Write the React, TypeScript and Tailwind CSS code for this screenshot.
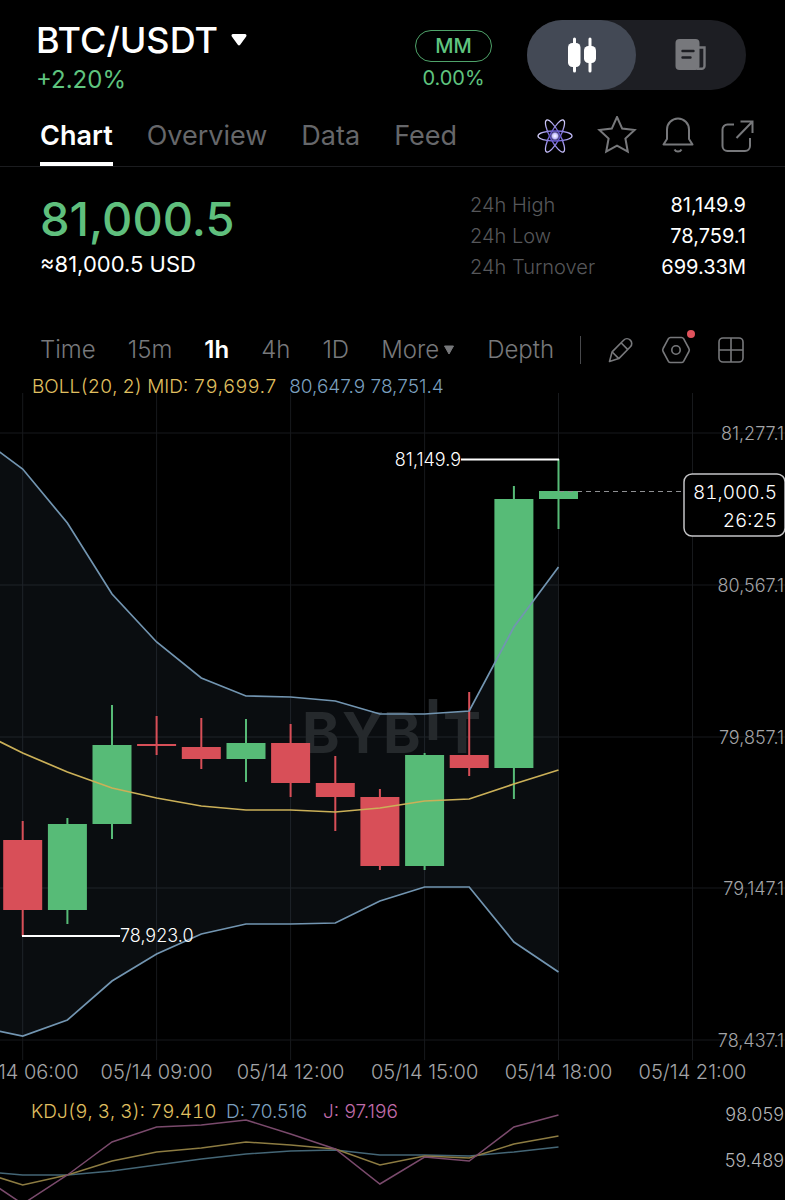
import { useState } from "react";

const TABS = ["Chart", "Overview", "Data", "Feed"];
const INTERVALS = ["Time", "15m", "1h", "4h", "1D"];

const STATS = [
  { label: "24h High", value: "81,149.9" },
  { label: "24h Low", value: "78,759.1" },
  { label: "24h Turnover", value: "699.33M" },
];

const UP = "#57bb77";
const DOWN = "#d84f58";

// body top, body bottom, wick top, wick bottom
const CANDLES = [
  { up: false, top: 447, bottom: 517, high: 428, low: 543 },
  { up: true, top: 431, bottom: 517, high: 425, low: 531 },
  { up: true, top: 352, bottom: 431, high: 312, low: 446 },
  { up: false, top: 351, bottom: 353, high: 323, low: 362 },
  { up: false, top: 354, bottom: 366, high: 325, low: 376 },
  { up: true, top: 350, bottom: 366, high: 326, low: 389 },
  { up: false, top: 350, bottom: 390, high: 331, low: 404 },
  { up: false, top: 390, bottom: 404, high: 363, low: 438 },
  { up: false, top: 404, bottom: 473, high: 396, low: 477 },
  { up: true, top: 362, bottom: 473, high: 360, low: 477 },
  { up: false, top: 362, bottom: 375, high: 299, low: 383 },
  { up: true, top: 106, bottom: 375, high: 93, low: 406 },
  { up: true, top: 98, bottom: 106, high: 66, low: 136 },
];

// first value of each series is the bar left of the visible range
const BOLL_UPPER = [43, 76, 130, 201, 249, 285, 303, 304, 308, 321, 321, 318, 234, 174];
const BOLL_MID = [338, 360, 379, 395, 405, 413, 417, 417, 419, 415, 408, 406, 391, 377];
const BOLL_LOWER = [634, 643, 627, 588, 561, 541, 531, 531, 530, 508, 494, 494, 549, 579];

const KDJ_K = [71, 85, 75, 61, 52, 48, 42, 45, 49, 65, 56, 58, 44, 36];
const KDJ_D = [71, 75, 75, 71, 65, 59, 54, 51, 50, 55, 55, 56, 52, 47];
const KDJ_J = [74, 104, 75, 42, 27, 25, 20, 34, 49, 84, 57, 61, 27, 15];

const PRICES = ["81,277.1", "80,567.1", "79,857.1", "79,147.1", "78,437.1"];
const TIMES = ["05/14 06:00", "05/14 09:00", "05/14 12:00", "05/14 15:00", "05/14 18:00", "05/14 21:00"];

const barX = (i: number) => Math.round((22.7 + i * 44.65) * 10) / 10;
const gridY = (i: number) => 40 + Math.round(i * 151.8);
const points = (series: number[]) => series.map((y, i) => `${barX(i - 1)},${y}`).join(" ");

function CandleIcon() {
  return (
    <svg width="30" height="36" viewBox="0 0 30 36" fill="currentColor" aria-hidden="true">
      <rect x="6" y="0.5" width="3" height="35" rx="1.5" />
      <rect x="1" y="6" width="12.5" height="24" rx="4.5" />
      <rect x="21.5" y="0.5" width="3" height="35" rx="1.5" />
      <rect x="17" y="9" width="12" height="17" rx="4.5" />
    </svg>
  );
}

function NewsIcon() {
  return (
    <svg width="32" height="32" viewBox="0 0 32 32" aria-hidden="true">
      <path d="M24 8.5h5.5v18.5a2.8 2.8 0 0 1-2.8 2.8H22" fill="none" stroke="#77787c" strokeWidth="2.4" />
      <rect x="0.5" y="0" width="24" height="31" rx="4" fill="#77787c" />
      <path d="M7.5 12h11M7.5 18.5h8" stroke="#1d1e23" strokeWidth="2.4" strokeLinecap="round" />
    </svg>
  );
}

function AtomIcon() {
  return (
    <svg width="36" height="36" viewBox="0 0 36 36" fill="none" aria-hidden="true">
      <defs>
        <radialGradient id="core">
          <stop offset="0" stopColor="#ffffff" />
          <stop offset="0.5" stopColor="#c4bdff" />
          <stop offset="1" stopColor="#5a4bd0" stopOpacity="0" />
        </radialGradient>
        <linearGradient id="orbit" x1="0" y1="0" x2="1" y2="0">
          <stop offset="0" stopColor="#d9d4ff" />
          <stop offset="0.5" stopColor="#5a4bc8" />
          <stop offset="1" stopColor="#c9c2ff" />
        </linearGradient>
      </defs>
      <g stroke="url(#orbit)" strokeWidth="1.3">
        <ellipse cx="18" cy="18" rx="17" ry="5" />
        <ellipse cx="18" cy="18" rx="18" ry="5" transform="rotate(62 18 18)" />
        <ellipse cx="18" cy="18" rx="18" ry="5" transform="rotate(118 18 18)" />
      </g>
      <circle cx="18" cy="18" r="5.5" fill="url(#core)" />
    </svg>
  );
}

function StarIcon() {
  return (
    <svg width="40" height="40" viewBox="0 0 40 40" fill="none" stroke="currentColor" strokeWidth="2" aria-hidden="true">
      <path d="M20 1l5.2 11.6 12.4 1.4-9.2 8.5 2.4 13.2L20 29.7 9.2 35.7l2.4-13.2L2.4 14l12.4-1.4z" />
    </svg>
  );
}

function BellIcon() {
  return (
    <svg width="34" height="38" viewBox="0 0 34 38" fill="none" stroke="currentColor" strokeWidth="2" aria-hidden="true">
      <path d="M2.5 27.5h29L28 22V12.500a11 11 0 0 0-22 0V22z" strokeLinejoin="round" />
      <path d="M13.5 32.5c1.500 2.800 5.500 2.800 7 0" />
    </svg>
  );
}

function ShareIcon() {
  return (
    <svg width="36" height="36" viewBox="0 0 36 36" fill="none" stroke="currentColor" strokeWidth="2" aria-hidden="true">
      <path d="M15 6.5H8.5a5 5 0 0 0-5 5V28a5 5 0 0 0 5 5H26a5 5 0 0 0 5-5v-8" />
      <path d="M21.5 3.5H33.5V15M33.5 3.5L17.5 20" />
    </svg>
  );
}

function PencilIcon() {
  return (
    <svg width="26" height="26" viewBox="0 0 26 26" fill="none" stroke="currentColor" strokeWidth="1.6" aria-hidden="true">
      <path d="M1.5 24.5l2.6-9.600L15.600 3.200a4.600 4.600 0 0 1 6.800 6.600L10.800 21.600z" strokeLinejoin="round" />
      <path d="M13 5.800l6.800 6.800M4.200 15l6.600 6.600" />
    </svg>
  );
}

function SettingsIcon() {
  return (
    <svg width="30" height="28" viewBox="0 0 30 28" fill="none" stroke="currentColor" strokeWidth="1.6" aria-hidden="true">
      <path d="M9.500 1.500h11a2.500 2.500 0 0 1 2.100 1.200l5.300 9.800a3 3 0 0 1 0 3l-5.300 9.800a2.500 2.500 0 0 1-2.100 1.200h-11a2.500 2.500 0 0 1-2.100-1.200L2.100 15.500a3 3 0 0 1 0-3l5.300-9.800a2.500 2.500 0 0 1 2.100-1.200z" />
      <circle cx="15" cy="14" r="4.2" />
    </svg>
  );
}

function LayoutIcon() {
  return (
    <svg width="26" height="26" viewBox="0 0 26 26" fill="none" stroke="currentColor" strokeWidth="1.6" aria-hidden="true">
      <rect x="1" y="1" width="24" height="24" rx="4" />
      <path d="M13 1v24M1 13h24" />
    </svg>
  );
}

function PriceChart() {
  return (
    <svg viewBox="0 0 785 707" className="block h-auto w-full" role="img" aria-label="BTC/USDT 1h candles">
      {/* Grid */}
      <g stroke="#17191c" strokeWidth="1">
        {PRICES.map((price, i) => (
          <path key={price} d={`M0 ${gridY(i)}H785`} />
        ))}
        {TIMES.map((time, i) => (
          <path key={time} d={`M${barX(i * 3)} 0V667`} />
        ))}
      </g>

      {/* Bollinger area */}
      <polygon points={`${points(BOLL_UPPER)} ${points(BOLL_LOWER).split(" ").reverse().join(" ")}`} fill="#7fa8c8" fillOpacity="0.08" />

      <text x="302 342 383 425 443" y="360 360 360 347 360" fontSize="57" fontWeight="700" fill="#25292c">
        BYBIT
      </text>

      {/* Candles */}
      {CANDLES.map((c, i) => (
        <g key={i} fill={c.up ? UP : DOWN}>
          <rect x={barX(i) - 1} y={c.high} width="2" height={c.low - c.high} />
          <rect x={barX(i) - 19.5} y={c.top} width="39" height={c.bottom - c.top} />
        </g>
      ))}

      <g fill="none" strokeWidth="1.7">
        <polyline points={points(BOLL_UPPER)} stroke="#7295b1" />
        <polyline points={points(BOLL_LOWER)} stroke="#7295b1" />
        <polyline points={points(BOLL_MID)} stroke="#cbb058" />
      </g>

      {/* High / low markers */}
      <path d="M461 66.5H559M22 543H120" stroke="#ffffff" strokeWidth="2" />
      <g fontSize="18" fontWeight="300" fill="#ffffff">
        <text x="461" y="73" textAnchor="end">81,149.9</text>
        <text x="120" y="549">78,923.0</text>
      </g>

      <g fontSize="18" fontWeight="300" fill="#a3a4a7" textAnchor="end">
        {PRICES.map((price, i) => (
          <text key={price} x="784" y={gridY(i) + 7}>{price}</text>
        ))}
      </g>

      {/* Last price */}
      <path d="M559 98.5H684" stroke="#8f9093" strokeWidth="1" strokeDasharray="5 4" />
      <rect x="684" y="81" width="101" height="62" rx="8" fill="#000000" stroke="#c4c4c6" strokeWidth="1.5" />
      <g fontSize="19" fontWeight="300" fill="#ffffff" textAnchor="end" className="tabular-nums">
        <text x="777" y="106">81,000.5</text>
        <text x="777" y="134">26:25</text>
      </g>

      <g fontSize="20" fontWeight="300" fill="#a3a4a7" textAnchor="middle">
        {TIMES.map((time, i) => (
          <text key={time} x={barX(i * 3)} y="686">{time}</text>
        ))}
      </g>
    </svg>
  );
}

function KdjChart() {
  return (
    <svg viewBox="0 0 785 100" className="block h-auto w-full" role="img" aria-label="KDJ indicator">
      <g fontSize="19" fontWeight="300">
        <text x="31" y="18" fill="#e0c060" className="tabular-nums">KDJ(9, 3, 3): 79.410</text>
        <text x="226" y="18" fill="#7a9fbe">D: 70.516</text>
        <text x="323" y="18" fill="#c06caa">J: 97.196</text>
      </g>
      <g fill="none" strokeWidth="1.5">
        <polyline points={points(KDJ_D)} stroke="#446676" />
        <polyline points={points(KDJ_K)} stroke="#8d7c42" />
        <polyline points={points(KDJ_J)} stroke="#7a4a6c" />
      </g>
      <g fontSize="18" fontWeight="300" fill="#b3b4b7" textAnchor="end">
        <text x="784" y="21">98.059</text>
        <text x="784" y="67">59.489</text>
      </g>
    </svg>
  );
}

export default function App() {
  const [view, setView] = useState("chart");
  const [tab, setTab] = useState("Chart");
  const [interval, setInterval] = useState("1h");

  return (
    <main className="min-h-screen overflow-x-hidden bg-black font-['Inter',sans-serif] text-white">
      {/* Pair header */}
      <header className="flex items-start pt-5 pr-[39px] pl-9">
        <div className="flex-1">
          <button className="flex h-10 items-center gap-3">
            <h1 className="text-4xl leading-10 font-medium">BTC/USDT</h1>
            <svg width="18" height="14" viewBox="0 0 18 14" fill="currentColor" aria-hidden="true">
              <path d="M3 1h12a1.500 1.500 0 0 1 1.200 2.400l-6 8.400a1.500 1.500 0 0 1-2.400 0l-6-8.400A1.500 1.500 0 0 1 3 1z" />
            </svg>
          </button>
          <p className="mt-1 text-2xl leading-8 text-[#5fc47f]">+2.20%</p>
        </div>
        <div className="mr-[35px] flex flex-col items-center pt-2.5 text-[#5fc47f]">
          <span className="flex h-8 w-[77px] items-center justify-center rounded-full border border-[#4fa36a] text-xl font-medium">MM</span>
          <span className="text-xl leading-8">0.00%</span>
        </div>
        <div className="flex h-[70px] rounded-full bg-[#1d1e23]">
          <button
            aria-label="Chart view"
            aria-pressed={view === "chart"}
            onClick={() => setView("chart")}
            className="flex w-[109px] items-center justify-center rounded-full aria-pressed:bg-[#434955]"
          >
            <CandleIcon />
          </button>
          <button
            aria-label="News view"
            aria-pressed={view === "news"}
            onClick={() => setView("news")}
            className="flex w-[110px] items-center justify-center rounded-full aria-pressed:bg-[#434955]"
          >
            <NewsIcon />
          </button>
        </div>
      </header>

      {/* Tabs */}
      <nav className="mt-2.5 flex h-[61px] items-end justify-between border-b border-[#1b1c1f] pr-[30px] pl-10">
        <div className="flex gap-[34px]">
          {TABS.map((name) => (
            <button
              key={name}
              onClick={() => setTab(name)}
              className={
                name === tab
                  ? "border-b-4 border-white pb-1.5 text-[27px] leading-10 font-semibold"
                  : "border-b-4 border-transparent pb-1.5 text-[27px] leading-10 text-[#66676a]"
              }
            >
              {name}
            </button>
          ))}
        </div>
        <div className="flex h-[60px] items-center gap-6 text-[#77787b]">
          <button aria-label="AI assistant"><AtomIcon /></button>
          <button aria-label="Favorite"><StarIcon /></button>
          <button aria-label="Alerts"><BellIcon /></button>
          <button aria-label="Share"><ShareIcon /></button>
        </div>
      </nav>

      {/* Last price and 24h stats */}
      <section className="flex items-start justify-between pt-[23px] pr-[39px] pl-10">
        <div>
          <p className="text-[47px] leading-[58px] font-medium text-[#5fbf7d]">81,000.5</p>
          <p className="text-[22px] leading-8">≈81,000.5 USD</p>
        </div>
        <dl className="w-[276px] text-xl leading-[31px]">
          {STATS.map((stat) => (
            <div key={stat.label} className="flex justify-between">
              <dt className="font-light text-[#56575a]">{stat.label}</dt>
              <dd>{stat.value}</dd>
            </div>
          ))}
        </dl>
      </section>

      {/* Intervals */}
      <div className="mt-[42px] flex h-[50px] items-center justify-between pr-[41px] pl-10 text-2xl text-[#77787b]">
        <div className="flex items-center gap-8">
          {INTERVALS.map((name) => (
            <button
              key={name}
              onClick={() => setInterval(name)}
              className={name === interval ? "font-semibold text-white" : "font-light"}
            >
              {name}
            </button>
          ))}
          <button className="flex items-center gap-1 font-light">
            More
            <svg width="12" height="10" viewBox="0 0 12 10" fill="currentColor" aria-hidden="true">
              <path d="M1.5 1h9L6 9z" stroke="currentColor" strokeLinejoin="round" />
            </svg>
          </button>
          <button className="font-light">Depth</button>
        </div>
        <div className="flex items-center gap-[27px]">
          <span className="h-7 w-px bg-[#48494c]" />
          <button aria-label="Draw"><PencilIcon /></button>
          <button aria-label="Indicators" className="relative">
            <SettingsIcon />
            <span className="absolute -top-1.5 -right-1 size-2 rounded-full bg-[#e0525c]" />
          </button>
          <button aria-label="Layout"><LayoutIcon /></button>
        </div>
      </div>

      {/* Indicator values */}
      <div className="-mb-1.5 flex h-6 items-center gap-3 pl-8 text-[19px] font-light">
        <span className="text-[#e0c060] tabular-nums">BOLL(20, 2) MID: 79,699.7</span>
        <span className="text-[#7a9fbe]">80,647.9 78,751.4</span>
      </div>

      <PriceChart />
      <KdjChart />
    </main>
  );
}
